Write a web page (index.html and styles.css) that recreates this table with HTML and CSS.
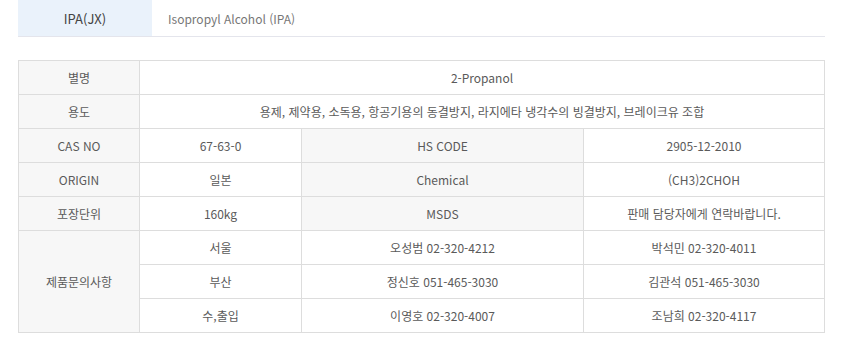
FILE: index.html
```html
<!DOCTYPE html>
<html lang="ko">
<head>
<meta charset="utf-8">
<link rel="stylesheet" href="styles.css">
</head>
<body>
<div class="page">
  <div class="title-row">
    <div class="title-code">IPA(JX)</div>
    <div class="title-name">Isopropyl Alcohol (IPA)</div>
  </div>
  <table class="spec">
    <colgroup>
      <col class="c1"><col class="c2"><col class="c3"><col class="c4">
    </colgroup>
    <tr><th>별명</th><td colspan="3">2-Propanol</td></tr>
    <tr><th>용도</th><td colspan="3">용제, 제약용, 소독용, 항공기용의 동결방지, 라지에타 냉각수의 빙결방지, 브레이크유 조합</td></tr>
    <tr><th>CAS NO</th><td>67-63-0</td><th>HS CODE</th><td>2905-12-2010</td></tr>
    <tr><th>ORIGIN</th><td>일본</td><th>Chemical</th><td>(CH3)2CHOH</td></tr>
    <tr><th>포장단위</th><td>160kg</td><th>MSDS</th><td>판매 담당자에게 연락바랍니다.</td></tr>
    <tr><th rowspan="3">제품문의사항</th><td>서울</td><td>오성범 02-320-4212</td><td>박석민 02-320-4011</td></tr>
    <tr><td>부산</td><td>정신호 051-465-3030</td><td>김관석 051-465-3030</td></tr>
    <tr><td>수,출입</td><td>이영호 02-320-4007</td><td>조남희 02-320-4117</td></tr>
  </table>
</div>
</body>
</html>
```

FILE: styles.css
```css
html, body {
  margin: 0;
  padding: 0;
  background: #fff;
}
body {
  font-family: "Noto Sans CJK KR", "Noto Sans", sans-serif;
  color: #555;
}
.page {
  padding-left: 18px;
  width: 807px;
}
.title-row {
  display: flex;
  height: 36px;
  border-bottom: 1px solid #e4e5ec;
}
.title-code {
  width: 134px;
  background: #eaf2fb;
  display: flex;
  align-items: center;
  justify-content: center;
  font-size: 13px;
  color: #444;
}
.title-name {
  display: flex;
  align-items: center;
  padding-left: 16px;
  font-size: 12px;
  color: #777;
}
.spec {
  margin-top: 23px;
  width: 806px;
  border-collapse: collapse;
  table-layout: fixed;
  font-size: 12px;
}
.c1 { width: 121px; }
.c2 { width: 162px; }
.c3 { width: 282px; }
.c4 { width: 241px; }
.spec th, .spec td {
  border: 1px solid #ddd;
  height: 34px;
  padding: 0;
  text-align: center;
  font-weight: normal;
  color: #5a5a5a;
  box-sizing: border-box;
}
.spec th {
  background: #f7f7f7;
}
.spec td {
  background: #fff;
}
```
